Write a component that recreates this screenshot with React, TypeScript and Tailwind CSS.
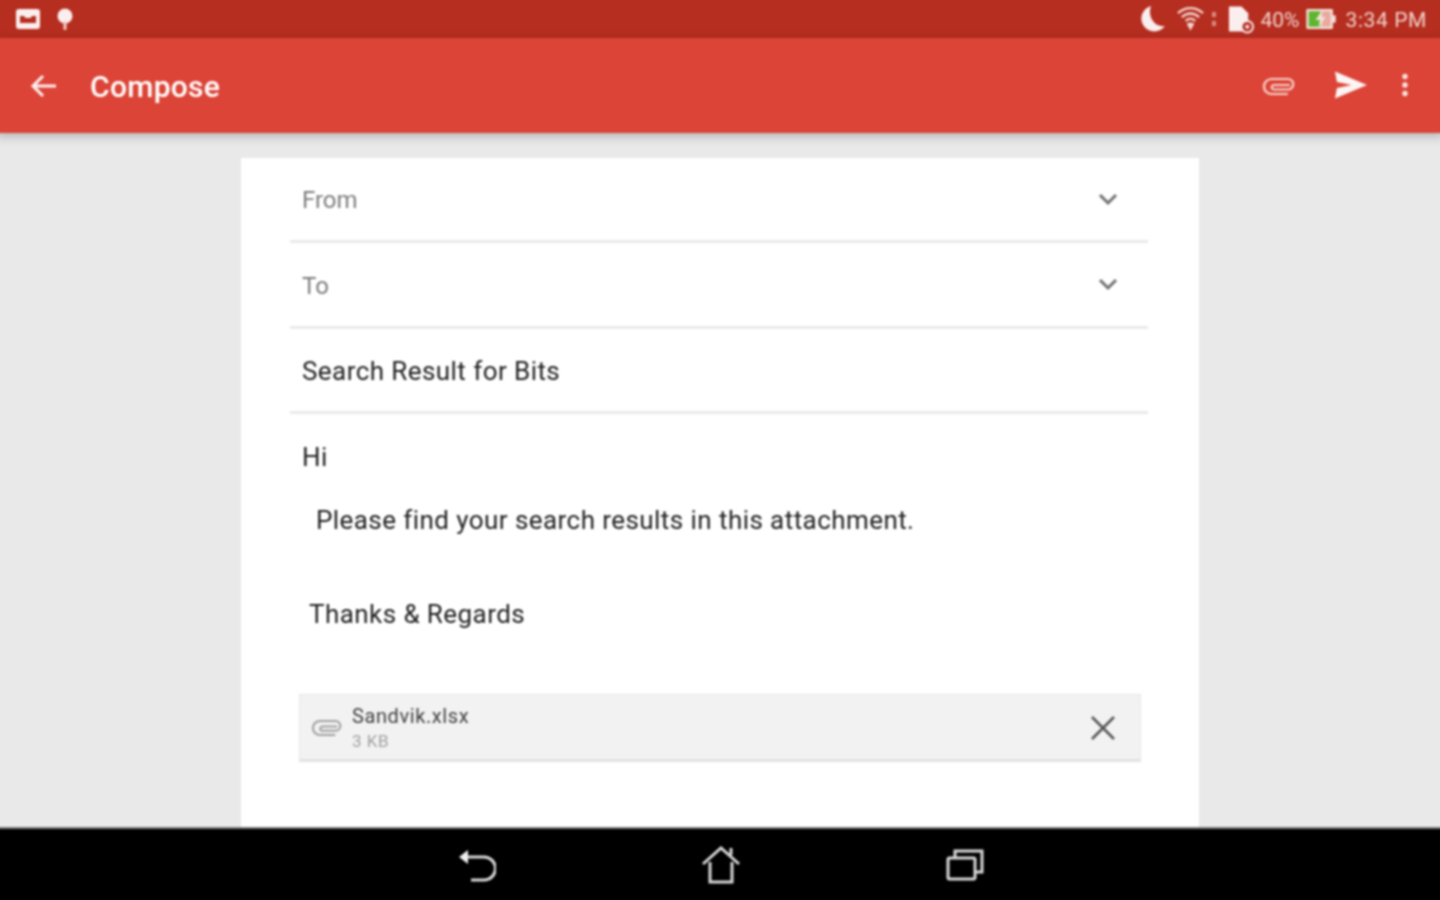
import React from "react";

const Clip = ({ className, color }: { className: string; color: string }) => (
  <svg viewBox="0 0 32 20" className={className} fill="none" stroke={color} strokeWidth="2.2" strokeLinecap="round">
    <path d="M24 18H8.500A7.500 7.500 0 0 1 8.500 3H25a5 5 0 0 1 0 10.500H11a2.200 2.200 0 0 1 0-4.500h15" />
  </svg>
);

const Chevron = () => (
  <svg viewBox="0 0 20 14" className="w-5 h-[14px] -mt-[3px]" fill="none" stroke="#707070" strokeWidth="3">
    <path d="M2 3l8 8 8-8" />
  </svg>
);

const Row = ({ label, muted, chevron, h }: { label: string; muted?: boolean; chevron?: boolean; h: string }) => (
  <div className={`${h} border-b-[3px] border-[#eaeaea] flex items-center justify-between pl-3 pr-[30px] pt-[2px]`}>
    <span className={muted ? "text-[24px] text-[#7c7c7c]" : "text-[26px] tracking-[0.43px] text-[#222222]"}>{label}</span>
    {chevron && <Chevron />}
  </div>
);

export default function App() {
  return (
    <div className="w-[1440px] h-[900px] overflow-hidden">
      <div className="-m-1 w-[1448px] h-[908px] flex flex-col bg-[#e9e9e9] blur-[0.8px]" style={{ fontFamily: "Roboto, sans-serif" }}>
        {/* status bar */}
        <div className="h-[42px] shrink-0 bg-[#b62e20] flex items-center justify-between pt-1 pl-[20px] pr-[17px]">
          <div className="flex items-center gap-[16px]">
            <svg viewBox="0 0 24 20" className="w-6 h-5">
              <rect x="0" y="0" width="24" height="20" rx="3" fill="#fbeeee" />
              <path d="M4 7h4l1.500 2h5L16 7h4v7H4z" fill="#b62e20" />
            </svg>
            <svg viewBox="0 0 18 24" className="w-[18px] h-6">
              <circle cx="9" cy="9" r="7.500" fill="#fbeeee" />
              <rect x="7.500" y="14" width="3" height="9" rx="1.200" fill="#f3d0c8" />
            </svg>
          </div>
          <div className="flex items-center text-[#f0d2cc] text-[21px]">
            <svg viewBox="0 0 26 28" className="w-[26px] h-7 mr-[11px]">
              <path d="M11 1a13 13 0 1 0 14 20C15 23 7 12 11 1z" fill="#fbeeee" />
            </svg>
            <svg viewBox="0 0 28 26" className="w-[27px] h-[26px] mr-[7px]" fill="none" stroke="#f3d5cf" strokeWidth="2.400">
              <path d="M1 7c8-7 18-7 26 0M5 11c6-5 12-5 18 0M9 15c3-3 7-3 10 0" />
              <path d="M14 25l-4-7c2.500-2 5.500-2 8 0z" fill="#f3d5cf" stroke="none" />
            </svg>
            <svg viewBox="0 0 6 20" className="w-[6px] h-5 mr-[11px]">
              <rect x="1" y="3" width="4" height="5" fill="#d98c7e" />
              <rect x="1" y="12" width="4" height="5" fill="#d98c7e" />
            </svg>
            <svg viewBox="0 0 27 29" className="w-[26px] h-[29px] mr-[7px]">
              <path d="M1 1h13l7 7v19H1z" fill="#fbeeee" />
              <circle cx="20" cy="22" r="6" fill="#b62e20" stroke="#fbeeee" strokeWidth="2" />
              <circle cx="20" cy="22" r="2" fill="#fbeeee" />
            </svg>
            <span className="mr-[6px] mt-[3px]">40%</span>
            <svg viewBox="0 0 32 24" className="w-[30px] h-[22px] mr-[10px]">
              <rect x="0" y="1" width="29" height="22" rx="1.500" fill="#f5e3de" />
              <rect x="2.500" y="3.500" width="13" height="17" fill="#5fb52f" />
              <rect x="17" y="3.500" width="9.500" height="17" fill="#e9a99e" />
              <rect x="29" y="8" width="3" height="8" fill="#f5e3de" />
              <path d="M17 3l-7 10h5l-2 8 8-11h-5z" fill="#f5e3de" />
            </svg>
            <span className="tracking-[0.6px] mt-[3px]">3:34 PM</span>
          </div>
        </div>

        {/* app bar */}
        <div className="h-[95px] shrink-0 bg-[#dc4437] flex items-center justify-between pl-[34px] pr-[36px] shadow-[0_3px_10px_rgba(0,0,0,0.25)] relative z-10">
          <div className="flex items-center gap-[34px]">
            <svg viewBox="0 0 26 24" className="w-[26px] h-6" fill="none" stroke="#fdf1ef" strokeWidth="3">
              <path d="M26 12H3M13 2L3 12l10 10" />
            </svg>
            <span className="text-[30px] font-medium text-white tracking-[0.3px] mt-[2px]">Compose</span>
          </div>
          <div className="flex items-center">
            <Clip className="w-8 h-5 mr-[39px]" color="#f7d3cd" />
            <svg viewBox="0 0 34 28" className="w-[33px] h-7 mr-[35px] -mt-[2px]">
              <path d="M1 0l33 14L1 28l2-11 15-3-15-3z" fill="#fdf5f3" />
            </svg>
            <svg viewBox="0 0 6 24" className="w-[6px] h-6 -mt-[2px]">
              <circle cx="3" cy="3.500" r="2.700" fill="#fbe6e2" />
              <circle cx="3" cy="12" r="2.700" fill="#fbe6e2" />
              <circle cx="3" cy="20.500" r="2.700" fill="#fbe6e2" />
            </svg>
          </div>
        </div>

        {/* body */}
        <div className="flex-1 min-h-0 flex justify-center pt-[25px]">
          <div className="w-[958px] bg-white pl-[49px] pr-[51px] flex flex-col">
            <Row label="From" muted chevron h="h-[85px]" />
            <Row label="To" muted chevron h="h-[86px]" />
            <Row label="Search Result for Bits" h="h-[85px]" />
            <div className="pl-3 text-[26px] tracking-[0.43px] text-[#222222] leading-[30px]">
              <p className="mt-[28px]">Hi</p>
              <p className="mt-[33px] pl-[14px]">Please find your search results in this attachment.</p>
              <p className="mt-[64px] pl-[7px]">Thanks &amp; Regards</p>
            </div>
            <div className="mt-[65px] ml-[9px] w-[842px] h-[68px] shrink-0 bg-[#f2f2f2] border border-[#e8e8e8] border-b-[3px] border-b-[#e2e2e2] flex items-center justify-between pl-[12px] pr-[24px]">
              <div className="flex items-center gap-[10px]">
                <Clip className="w-[30px] h-[19px]" color="#a0a0a0" />
                <div className="flex flex-col mt-[2px]">
                  <span className="text-[20px] leading-[26px] tracking-[0.6px] text-[#3f3f3f]">Sandvik.xlsx</span>
                  <span className="text-[17px] leading-[25px] tracking-[0.5px] text-[#a0a0a0]">3 KB</span>
                </div>
              </div>
              <svg viewBox="0 0 26 26" className="w-[26px] h-[26px] mt-[1px]" fill="none" stroke="#555555" strokeWidth="2.500">
                <path d="M2 2l22 22M24 2L2 24" />
              </svg>
            </div>
          </div>
        </div>

        {/* nav */}
        <div className="h-[77px] shrink-0 bg-black border-t-2 border-[#777777] flex items-center justify-center pb-1 relative z-10">
          <div className="flex items-center gap-[205px] ml-[1px]">
            <svg viewBox="0 0 38 36" className="w-[38px] h-9" fill="none" stroke="#d8d8d8" strokeWidth="3">
              <path d="M8 10h18a9.500 9.500 0 0 1 0 23H13" />
              <path d="M1 10l9-7v14z" fill="#f0f0f0" stroke="none" />
            </svg>
            <svg viewBox="0 0 40 38" className="w-10 h-[38px]" fill="none" stroke="#d8d8d8" strokeWidth="3">
              <path d="M2 18L20 2l18 16M9 16v20h22V16M30 9V2" />
            </svg>
            <svg viewBox="0 0 38 32" className="w-[38px] h-8" fill="none" stroke="#d8d8d8" strokeWidth="3">
              <rect x="2" y="9" width="27" height="21" rx="1.500" />
              <path d="M9 9V2h27v21h-7" />
            </svg>
          </div>
        </div>
      </div>
    </div>
  );
}
